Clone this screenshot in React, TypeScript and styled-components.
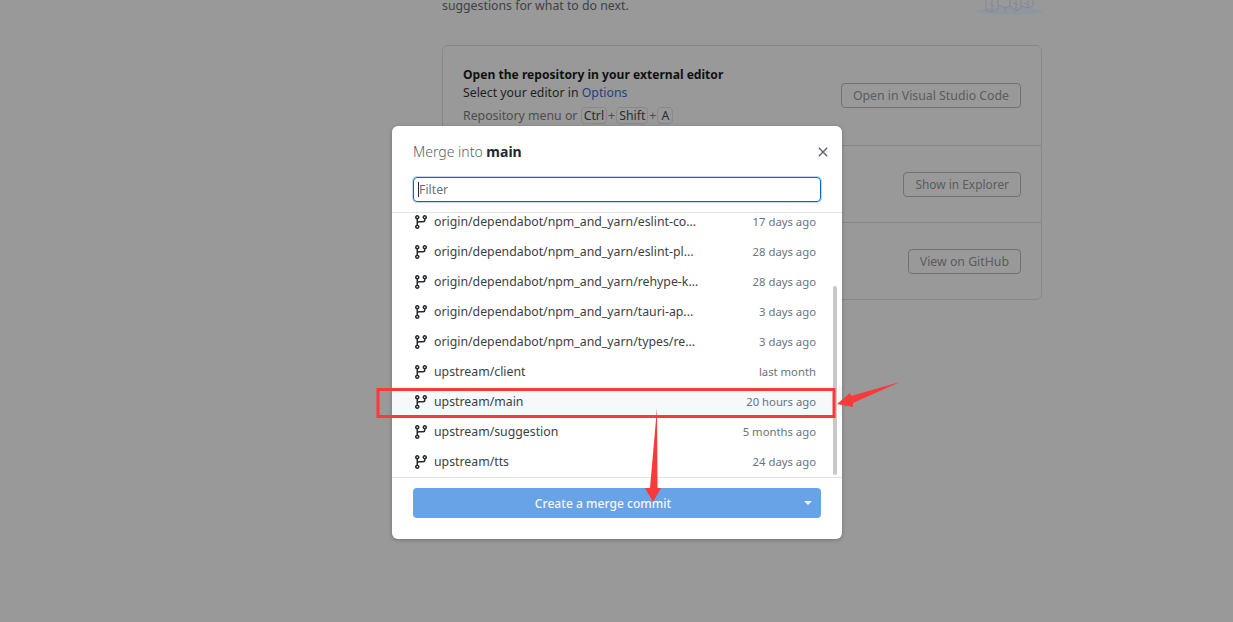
import React from "react";
import styled, { createGlobalStyle } from "styled-components";

const GlobalStyle = createGlobalStyle`
  html, body {
    margin: 0;
    padding: 0;
    height: 100%;
    overflow: hidden;
  }
  body {
    font-family: "Noto Sans", "Open Sans", sans-serif;
    font-size: 12.3px;
    color: #24292e;
  }
  * { box-sizing: border-box; }
`;

const branches = [
  { name: "origin/dependabot/npm_and_yarn/eslint-co...", age: "17 days ago" },
  { name: "origin/dependabot/npm_and_yarn/eslint-pl...", age: "28 days ago" },
  { name: "origin/dependabot/npm_and_yarn/rehype-k...", age: "28 days ago" },
  { name: "origin/dependabot/npm_and_yarn/tauri-ap...", age: "3 days ago" },
  { name: "origin/dependabot/npm_and_yarn/types/re...", age: "3 days ago" },
  { name: "upstream/client", age: "last month" },
  { name: "upstream/main", age: "20 hours ago", active: true },
  { name: "upstream/suggestion", age: "5 months ago" },
  { name: "upstream/tts", age: "24 days ago" },
];

function BranchIcon() {
  return (
    <BranchSvg viewBox="0 0 16 16" fill="#24292e">
      <path
        fillRule="evenodd"
        d="M11.75 2.5a.75.75 0 100 1.5.75.75 0 000-1.5zm-2.25.75a2.25 2.25 0 113 2.122V6A2.5 2.5 0 0110 8.5H6a1 1 0 00-1 1v1.128a2.251 2.251 0 11-1.5 0V5.372a2.25 2.25 0 111.5 0v1.836A2.492 2.492 0 016 7h4a1 1 0 001-1v-.628A2.25 2.25 0 019.5 3.25zM4.25 12a.75.75 0 100 1.5.75.75 0 000-1.5zM3.5 3.25a.75.75 0 111.5 0 .75.75 0 01-1.5 0z"
      />
    </BranchSvg>
  );
}

function App() {
  return (
    <>
      <GlobalStyle />
      <Page>
        <Column>
          <Intro>
            <IntroText>suggestions for what to do next.</IntroText>
            <Illustration viewBox="0 0 68 20" fill="none">
              <ellipse cx="34" cy="11" rx="34" ry="3.5" fill="#8f969e" />
              <path d="M11 0v10l6 2 6-3V0M17 0v12M23 5l7 3 5-2V0M30 8v3M35 6l6 5 5-3V0M41 0v11M46 6l7 2 5-2V0M53 0v8M15 4l5 2M38 3l5 2M49 3l5 2" stroke="#808a98" strokeWidth="1" />
            </Illustration>
          </Intro>
          <Card>
            <CardRow $height={100}>
              <CardText>
                <CardTitle>Open the repository in your external editor</CardTitle>
                <div>Select your editor in <CardLink>Options</CardLink></div>
                <Hint>
                  Repository menu or <Key>Ctrl</Key><Plus>+</Plus><Key>Shift</Key><Plus>+</Plus><Key>A</Key>
                </Hint>
              </CardText>
              <GhostButton>Open in Visual Studio Code</GhostButton>
            </CardRow>
            <CardRow $height={77}>
              <CardText />
              <GhostButton $tight>Show in Explorer</GhostButton>
            </CardRow>
            <CardRow $height={76}>
              <CardText />
              <GhostButton>View on GitHub</GhostButton>
            </CardRow>
          </Card>
        </Column>

        <Dialog>
          <DialogHeader>
            <DialogTitle>Merge into <strong>main</strong></DialogTitle>
            <CloseIcon viewBox="0 0 10 10" stroke="#586069" strokeWidth="1.3">
              <path d="M.8.8l8.4 8.4M9.2.8L.8 9.2" />
            </CloseIcon>
          </DialogHeader>
          <FilterWrap>
            <FilterInput>
              <Caret />
              Filter
            </FilterInput>
          </FilterWrap>
          <BranchList>
            <BranchRows>
              {branches.map((b) => (
                <BranchRow key={b.name} $active={b.active}>
                  <BranchIcon />
                  <BranchName>{b.name}</BranchName>
                  <BranchAge>{b.age}</BranchAge>
                </BranchRow>
              ))}
            </BranchRows>
            <ScrollThumb />
          </BranchList>
          <DialogFooter>
            <MergeButton>
              <MergeLabel>Create a merge commit</MergeLabel>
              <MergeCaret />
            </MergeButton>
          </DialogFooter>
        </Dialog>

        <Annotations viewBox="0 0 1233 622">
          <rect x="378" y="389.5" width="456" height="27" fill="none" stroke="#f83a3a" strokeWidth="3" />
          <path d="M837 404L850 393L851 396L900 382L853 403L853 407Z" fill="#f83a3a" />
          <path d="M657 408L657.5 488H661L653 502L645 488H650Z" fill="#f83a3a" />
        </Annotations>
      </Page>
    </>
  );
}

export default App;

const Page = styled.div`
  position: relative;
  width: 1233px;
  height: 622px;
  overflow: hidden;
  background-color: #999999;
`;

const Column = styled.div`
  width: 600px;
  margin-left: 442px;
  display: flex;
  flex-direction: column;
`;

const Intro = styled.div`
  height: 45px;
  display: flex;
  justify-content: space-between;
  align-items: flex-start;
  line-height: 18px;
  color: #3f4143;
`;

const IntroText = styled.span`
  line-height: 12px;
`;

const Illustration = styled.svg`
  width: 68px;
  height: 20px;
  margin-right: -1px;
`;

const Card = styled.div`
  border: 1px solid #868888;
  border-radius: 6px;
  display: flex;
  flex-direction: column;
`;

const CardRow = styled.div<{ $height: number }>`
  height: ${(p) => p.$height}px;
  padding: 0 20px;
  display: flex;
  align-items: center;
  justify-content: space-between;
  border-bottom: 1px solid #868888;

  &:last-child {
    border-bottom: none;
  }
`;

const CardText = styled.div`
  margin-top: -1px;
  line-height: 18px;
  color: #1e1e1e;
`;

const CardTitle = styled.div`
  font-weight: 700;
  font-size: 12.1px;
  color: #111111;
`;

const CardLink = styled.span`
  color: #233f7c;
`;

const Hint = styled.div`
  margin-top: 5px;
  color: #4a4c4e;
`;

const Key = styled.span`
  display: inline-block;
  min-width: 16px;
  padding: 0 2px;
  line-height: 15px;
  text-align: center;
  border: 1px solid #868a8c;
  border-radius: 4px;
  color: #2a2c2e;
`;

const Plus = styled.span`
  margin: 0 1px;
`;

const GhostButton = styled.div<{ $tight?: boolean }>`
  height: 25px;
  padding: 0 11px;
  display: flex;
  align-items: center;
  border: 1px solid #6f7173;
  border-radius: 4px;
  font-size: ${(p) => (p.$tight ? "11.9px" : "12.3px")};
  color: #5a5c5e;
  white-space: nowrap;
`;

const Dialog = styled.div`
  position: absolute;
  left: 392px;
  top: 126px;
  width: 450px;
  height: 413px;
  background: #ffffff;
  border-radius: 6px;
  box-shadow: 0 1px 4px rgba(0, 0, 0, 0.25);
  display: flex;
  flex-direction: column;
`;

const DialogHeader = styled.div`
  height: 51px;
  padding: 0 14px 0 21px;
  display: flex;
  align-items: center;
  justify-content: space-between;
`;

const DialogTitle = styled.div`
  font-size: 14px;
  font-weight: 300;
  color: #5a5f66;

  strong {
    font-weight: 700;
    color: #24292e;
  }
`;

const CloseIcon = styled.svg`
  width: 10px;
  height: 10px;
`;

const FilterWrap = styled.div`
  height: 36px;
  padding: 0 21px;
  border-bottom: 1px solid #e1e4e8;
`;

const FilterInput = styled.div`
  height: 25px;
  padding-left: 4px;
  display: flex;
  align-items: center;
  border: 1px solid #0366d6;
  border-radius: 4px;
  box-shadow: 0 0 0 1px rgba(3, 102, 214, 0.25);
  color: #6a737d;
`;

const Caret = styled.span`
  width: 1px;
  height: 15px;
  background: #24292e;
`;

const BranchList = styled.div`
  position: relative;
  height: 264px;
  overflow: hidden;
`;

const BranchRows = styled.div`
  margin-top: -7px;
  display: flex;
  flex-direction: column;
`;

const BranchRow = styled.div<{ $active?: boolean }>`
  height: 30px;
  padding: 0 26px 0 21px;
  display: flex;
  align-items: center;
  background: ${(p) => (p.$active ? "#f6f8fa" : "transparent")};
`;

const BranchSvg = styled.svg`
  width: 16px;
  height: 16px;
  flex: none;
  margin-top: 1px;
`;

const BranchName = styled.span`
  margin-left: 5px;
  flex: 1;
  color: #3b4046;
  white-space: nowrap;
`;

const BranchAge = styled.span`
  font-size: 11.3px;
  color: #6a737d;
  white-space: nowrap;
`;

const ScrollThumb = styled.div`
  position: absolute;
  right: 5px;
  top: 73px;
  width: 4px;
  height: 189px;
  border-radius: 2px;
  background: #c8c8c8;
`;

const DialogFooter = styled.div`
  height: 62px;
  padding: 10px 21px 0;
  border-top: 1px solid #e1e4e8;
`;

const MergeButton = styled.div`
  position: relative;
  height: 30px;
  padding-right: 28px;
  display: flex;
  align-items: center;
  justify-content: center;
  background: #67a3e6;
  border-radius: 4px;
`;

const MergeLabel = styled.span`
  font-weight: 500;
  font-size: 12.1px;
  color: #f2f7fc;
`;

const MergeCaret = styled.span`
  position: absolute;
  right: 9px;
  top: 13px;
  border-left: 4px solid transparent;
  border-right: 4px solid transparent;
  border-top: 4px solid #f2f7fc;
`;

const Annotations = styled.svg`
  position: absolute;
  inset: 0;
  width: 1233px;
  height: 622px;
  pointer-events: none;
`;
